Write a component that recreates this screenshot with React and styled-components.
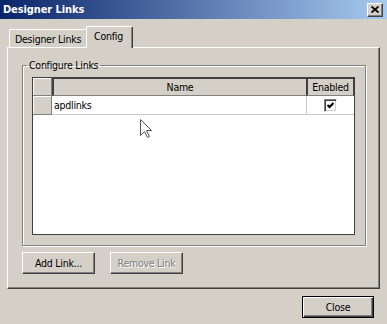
import React from 'react';
import styled, { createGlobalStyle } from 'styled-components';

const GlobalStyle = createGlobalStyle`
  html, body {
    margin: 0;
    padding: 0;
    background: #d4d0c8;
  }
  body {
    font-family: "DejaVu Sans Condensed", "DejaVu Sans", "Liberation Sans", sans-serif;
    font-size: 10.5px;
    letter-spacing: -0.25px;
    color: #000;
  }
  * {
    box-sizing: border-box;
  }
`;

const Window = styled.div`
  width: 387px;
  height: 324px;
  display: flex;
  flex-direction: column;
  background: #d4d0c8;
  overflow: hidden;
`;

const TitleBar = styled.div`
  height: 19px;
  flex: none;
  display: flex;
  align-items: center;
  justify-content: space-between;
  padding: 0 4px 0 3px;
  background: linear-gradient(to right, #0a246a, #a6caf0);
  color: #fff;
  font-weight: bold;
  font-size: 11px;
  letter-spacing: -0.1px;
`;

const TitleButton = styled.div`
  width: 16px;
  height: 14px;
  display: flex;
  align-items: center;
  justify-content: center;
  background: #d4d0c8;
  border: 1px solid;
  border-color: #fff #404040 #404040 #fff;
  box-shadow: inset -1px -1px 0 #808080;
`;

const Body = styled.div`
  padding: 7px 7px 0 7px;
`;

const TabStrip = styled.div`
  height: 22px;
  display: flex;
  align-items: flex-end;
  padding-left: 2px;
  margin-bottom: -1px;
  position: relative;
  z-index: 1;
`;

const Tab = styled.div`
  height: ${p => (p.$active ? '22px' : '18px')};
  margin: ${p => (p.$active ? '0 -2px 0 -2px' : '0 0 1px 0')};
  padding: ${p => (p.$active ? '3px 9px 0 7px' : '3px 6px 0 5px')};
  background: #d4d0c8;
  border-top: 1px solid #fff;
  border-left: 1px solid #fff;
  border-right: 1px solid #404040;
  border-radius: 2px 2px 0 0;
  box-shadow: inset -1px 0 0 #808080;
  position: relative;
  z-index: ${p => (p.$active ? 2 : 1)};
  white-space: nowrap;
`;

const Panel = styled.div`
  height: 242px;
  border: 1px solid;
  border-color: #fff #404040 #404040 #fff;
  box-shadow: inset -1px -1px 0 #808080;
  padding: 11px 13px 0 14px;
`;

const Group = styled.fieldset`
  margin: 0;
  padding: 6px 10px 10px 9px;
  border: 1px solid #808080;
  box-shadow: inset 1px 1px 0 #fff, 1px 1px 0 #fff;
`;

const Legend = styled.legend`
  margin-left: -5px;
  padding: 0 2px;
  line-height: 12px;
`;

const Grid = styled.div`
  position: relative;
  height: 158px;
  background: #fff;
  border: 1px solid #404040;
`;

const GridRow = styled.div`
  display: grid;
  grid-template-columns: 19px 1fr 48px;
  height: ${p => (p.$header ? '18px' : '19px')};
`;

const Corner = styled.div`
  background: #d4d0c8;
  border-right: 1px solid #808080;
  border-bottom: 1px solid #808080;
  box-shadow: inset 1px 1px 0 #fff;
`;

const ColHead = styled.div`
  background: #d4d0c8;
  border-top: 1px solid #404040;
  border-left: 2px solid #404040;
  border-right: ${p => (p.$last ? '1px solid #404040' : 'none')};
  border-bottom: 1px solid #808080;
  display: flex;
  align-items: center;
  justify-content: center;
  white-space: nowrap;
`;

const Cell = styled.div`
  display: flex;
  align-items: center;
  justify-content: ${p => (p.$center ? 'center' : 'flex-start')};
  padding-left: ${p => (p.$center ? '0' : '2px')};
  border-bottom: 1px solid #c8c8c8;
  border-left: ${p => (p.$center ? '1px solid #c8c8c8' : 'none')};
`;

const Checkbox = styled.div`
  width: 13px;
  height: 13px;
  background: #fff;
  border: 1px solid;
  border-color: #808080 #fff #fff #808080;
  box-shadow: inset 1px 1px 0 #404040, inset -1px -1px 0 #d4d0c8;
  display: flex;
  align-items: center;
  justify-content: center;
`;

const Cursor = styled.svg`
  position: absolute;
  left: 107px;
  top: 41px;
`;

const ButtonRow = styled.div`
  display: flex;
  gap: 15px;
  margin-top: 6px;
`;

const Button = styled.div`
  width: ${p => p.$w || 73}px;
  height: 22px;
  display: flex;
  align-items: center;
  justify-content: center;
  background: #d4d0c8;
  border: 1px solid;
  border-color: ${p => (p.$default ? '#000' : '#fff #404040 #404040 #fff')};
  box-shadow: ${p =>
    p.$default
      ? 'inset 1px 1px 0 #fff, inset -1px -1px 0 #404040, inset -2px -2px 0 #808080'
      : 'inset -1px -1px 0 #808080'};
  color: ${p => (p.$disabled ? '#808080' : '#000')};
  text-shadow: ${p => (p.$disabled ? '1px 1px 0 #fff' : 'none')};
  white-space: nowrap;
`;

const Footer = styled.div`
  display: flex;
  justify-content: flex-end;
  padding: 7px 13px 0 0;
`;

const App = () => {
  return (
    <Window>
      <GlobalStyle />
      <TitleBar>
        <span>Designer Links</span>
        <TitleButton>
          <svg width="8" height="7" viewBox="0 0 8 7">
            <path d="M0.5 0.5 L7.5 6.5 M7.5 0.5 L0.5 6.5" stroke="#000" strokeWidth="1.8" />
          </svg>
        </TitleButton>
      </TitleBar>
      <Body>
        <TabStrip>
          <Tab>Designer Links</Tab>
          <Tab $active>Config</Tab>
        </TabStrip>
        <Panel>
          <Group>
            <Legend>Configure Links</Legend>
            <Grid>
              <GridRow $header>
                <Corner />
                <ColHead>Name</ColHead>
                <ColHead $last>Enabled</ColHead>
              </GridRow>
              <GridRow>
                <Corner />
                <Cell>apdlinks</Cell>
                <Cell $center>
                  <Checkbox>
                    <svg width="7" height="7" viewBox="0 0 7 7">
                      <polyline points="0.5,3 2.5,5 6.5,1" fill="none" stroke="#000" strokeWidth="2" />
                    </svg>
                  </Checkbox>
                </Cell>
              </GridRow>
              <Cursor width="12" height="20" viewBox="0 0 12 20">
                <path
                  d="M0.5 0.5 L0.5 16.5 L4.5 12.5 L7.5 18.5 L9.5 17.5 L6.5 11.5 L11.5 11.5 Z"
                  fill="#fff"
                  stroke="#555"
                  strokeWidth="1"
                />
              </Cursor>
            </Grid>
          </Group>
          <ButtonRow>
            <Button>Add Link...</Button>
            <Button $disabled>Remove Link</Button>
          </ButtonRow>
        </Panel>
      </Body>
      <Footer>
        <Button $default $w={72}>Close</Button>
      </Footer>
    </Window>
  );
};

export default App;
